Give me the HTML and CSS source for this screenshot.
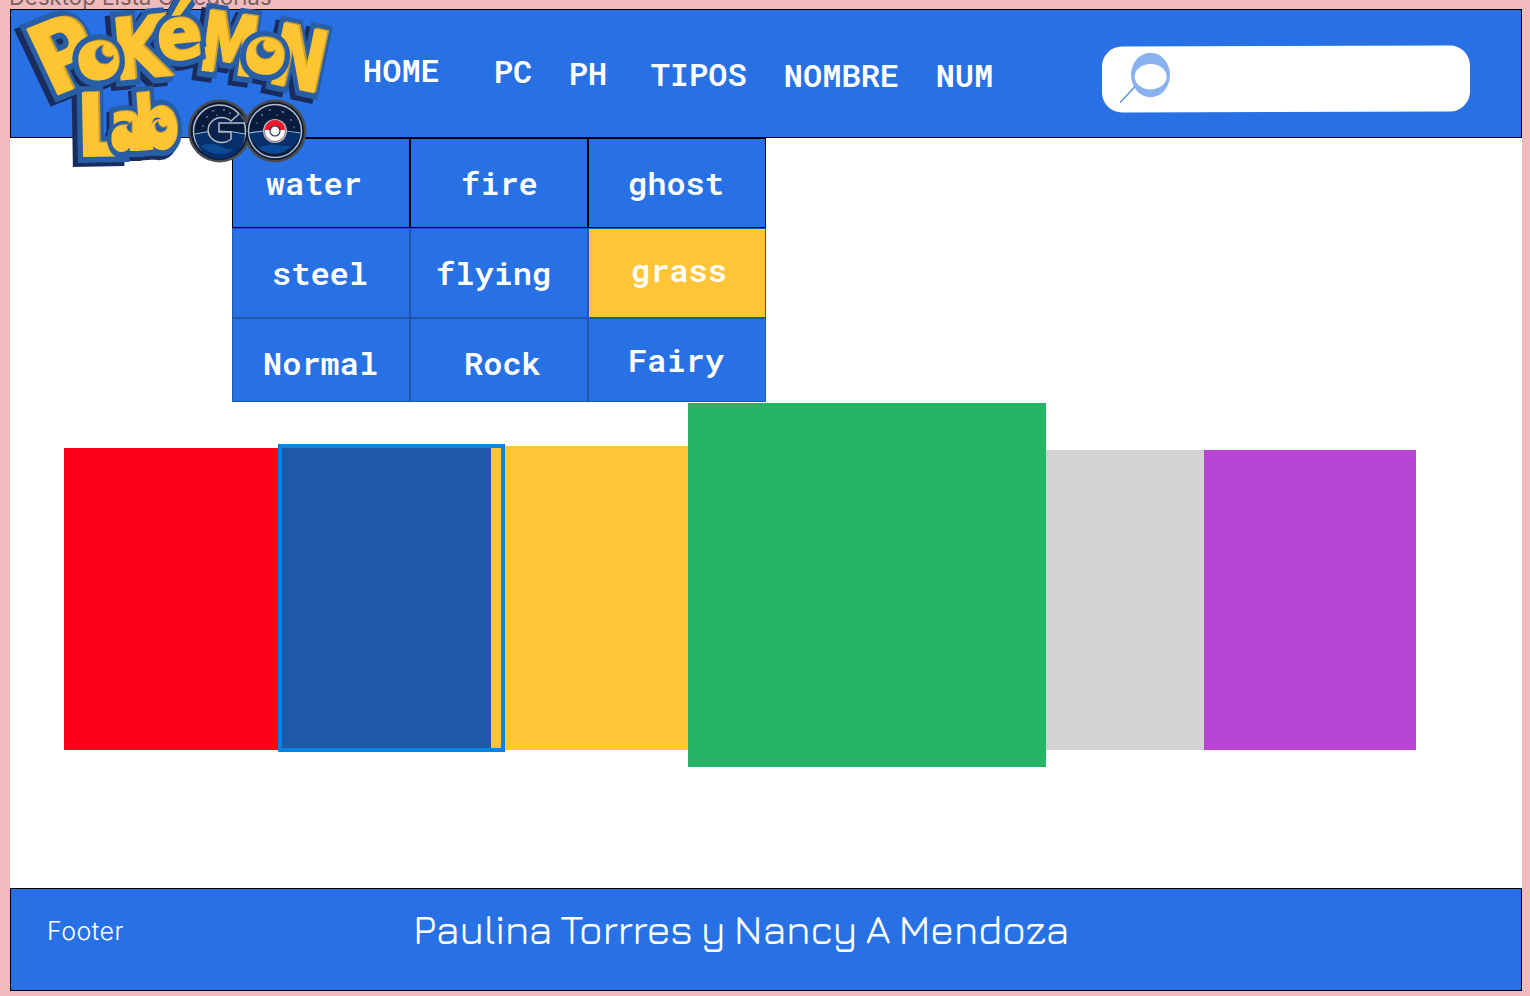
FILE: index.html
```
<!DOCTYPE html>
<html lang="es">
<head>
<meta charset="utf-8">
<title>Pokémon Lab GO</title>
<link rel="stylesheet" href="styles.css">
</head>
<body>
<div class="frame-name">Desktop Lista Categorias</div>
<div class="frame">
  <header class="header">
    <svg class="logo" width="340" height="175" viewBox="0 0 340 175" aria-label="Pokémon Lab GO">
      <defs>
        <g id="back">
          <text font-size="98" transform="translate(51 97) rotate(-22) scale(.84 1) skewX(4)">P</text>
          <text font-size="84" transform="translate(115 80) rotate(-5) scale(.84 1)">K</text>
          <text font-size="82" transform="translate(197 69) rotate(8) scale(.7 1)">M</text>
          <text font-size="86" transform="translate(266 82) rotate(12) scale(.76 .98)">N</text>
          <text font-size="86" transform="translate(77 156) rotate(-1) scale(.88 1)">L</text>
        </g>
        <g id="front">
          <text font-size="64" transform="translate(79 81) rotate(-7) scale(1 1.03)">o</text>
          <text font-size="72" transform="translate(159 61) rotate(-6) scale(.93 1)">é</text>
          <text font-size="60" transform="translate(243 71) rotate(5) scale(1 1.03)">o</text>
          <text font-size="68" transform="translate(110 150) scale(.72 1)">a</text>
          <text font-size="74" transform="translate(136 150) rotate(-4) scale(.84 1)">b</text>
        </g>
      </defs>
      <g class="logo-depth"><use href="#back" x="-5" y="4"/><use href="#front" x="-3" y="4"/></g>
      <use href="#back" class="logo-edge"/>
      <use href="#back" class="logo-shade" x="2" y="-1"/>
      <use href="#back" class="logo-face"/>
      <use href="#front" class="logo-edge"/>
      <use href="#front" class="logo-shade" x="1" y="-1"/>
      <use href="#front" class="logo-face"/>
      <g class="eye">
        <ellipse cx="101" cy="62" rx="13" ry="14"/><path d="M104 45a9.500 9.500 0 1 0 10 10a6 6 0 1 1-10-10z"/>
        <ellipse cx="264" cy="55" rx="12" ry="12"/><path d="M265 40a9.500 9.500 0 1 0 10 10a6 6 0 1 1-10-10z"/>
        <ellipse cx="160" cy="131" rx="10" ry="12"/><path d="M158 121a6 6 0 1 0 9 5q-7 4-9-5z"/>
        <ellipse cx="126" cy="135" rx="8" ry="9"/><path d="M132 121q-11 7 0 12z"/>
      </g>
      <circle cx="219.500" cy="131" r="31.500" fill="#4a4c4d"/><circle cx="275" cy="131" r="31.500" fill="#4a4c4d"/>
      <circle cx="219.500" cy="131" r="29" fill="#071b3c"/><circle cx="275" cy="131" r="29" fill="#071b3c"/>
      <g class="badge">
        <circle cx="219.500" cy="131" r="26"/><circle cx="275" cy="131" r="26.500"/>
      </g>
      <path d="M195 134q24-6 50 0a25 25 0 0 1-50 0zM249.500 133q25-5 51 0a26 26 0 0 1-51 0z" fill="#06306c"/>
      <path d="M200 146q12-4 20 0t14 3q-15 12-34-3zM258 148q12-5 20-3t14 0q-15 16-34 3z" fill="#0c4a96"/>
      <path d="M195 134q24-6 50 0M249.500 133q25-5 51 0" fill="none" stroke="#8bb9de" stroke-width="1.200"/>
      <g fill="#c9d9ee"><circle cx="207" cy="117" r=".7"/><circle cx="213" cy="111" r=".7"/><circle cx="224" cy="110" r=".8"/><circle cx="203" cy="126" r=".7"/><circle cx="230" cy="113" r=".7"/><circle cx="217" cy="115" r=".6"/><circle cx="262" cy="115" r=".7"/><circle cx="270" cy="110" r=".7"/><circle cx="283" cy="112" r=".8"/><circle cx="291" cy="120" r=".7"/><circle cx="257" cy="123" r=".6"/><circle cx="294" cy="127" r=".6"/><circle cx="277" cy="115" r=".6"/></g>
      <path d="M240 113.500l-9 7.500q-5-2-9-2q-4 2-3 4h29q-2-6-8-9.500z" fill="#4a4c4d"/>
      <path d="M239 114l-8 7a13.500 12.500 0 1 0 0 18v-7h-12v-9h26" fill="#08234d" stroke="#b9bdc6" stroke-width="1.500"/>
      <circle cx="275" cy="131" r="12" fill="#b9bdc6"/>
      <circle cx="275" cy="131" r="10.500" fill="#fff" stroke="#6b252c" stroke-width=".6"/>
      <path d="M265 130a10 10 0 0 1 20 0z" fill="#f4162b"/>
      <circle cx="275" cy="131" r="5" fill="#fff" stroke="#22355a" stroke-width="1.200"/>
    </svg>
    <nav class="nav">
      <a class="home">HOME</a><a class="pc">PC</a><a class="ph">PH</a><a class="tipos">TIPOS</a><a class="nombre">NOMBRE</a><a class="num">NUM</a>
    </nav>
    <div class="search">
      <svg class="lens" width="72" height="64" viewBox="0 0 72 64">
        <path fill-rule="evenodd" fill="#8ab2f1" d="M29 29.500a19.500 22.300 0 1 0 39 0a19.500 22.300 0 1 0-39 0zM32.700 31.200a16 12.700 0 1 0 32 0a16 12.700 0 1 0-32 0z"/>
        <path d="M32.500 41.500L18 57" stroke="#3d7fe4" stroke-width="1.200"/>
      </svg>
    </div>
  </header>
  <main class="main">
    <div class="types">
      <div class="type dark water">water</div><div class="type dark fire">fire</div><div class="type dark ghost">ghost</div>
      <div class="type steel">steel</div><div class="type flying">flying</div><div class="type active grass">grass</div>
      <div class="type normal">Normal</div><div class="type rock">Rock</div><div class="type fairy">Fairy</div>
    </div>
    <div class="cards">
      <div class="card red"></div>
      <div class="card blue"><span class="selection"></span></div>
      <div class="card yellow"></div>
      <div class="card green"></div>
      <div class="card gray"></div>
      <div class="card purple"></div>
    </div>
  </main>
  <footer class="footer">
    <span class="footer-label">Footer</span>
    <span class="authors">Paulina Torrres y Nancy A Mendoza</span>
  </footer>
</div>
</body>
</html>
```

FILE: styles.css
```
* { box-sizing: border-box; }
body { margin: 0; height: 996px; overflow: hidden; background: #f1bbbe; }

.frame-name {
  height: 9px;
  padding: 0 0 1px 9px;
  display: flex;
  align-items: flex-end;
  white-space: nowrap;
  font: 22px/22px Inter, sans-serif;
  letter-spacing: 0.1px;
  color: #7a5e60;
}
.frame { width: 1512px; margin-left: 10px; }

.header {
  position: relative;
  z-index: 1;
  display: flex;
  align-items: flex-start;
  height: 129px;
  border: 1px solid #000;
  background: #2871e4;
}
.logo { position: absolute; left: -11px; top: -10px; overflow: visible; }
.logo text { font-family: "DejaVu Sans", sans-serif; font-weight: 700; }
.logo-depth { fill: #1a2b5e; stroke: #1a2b5e; stroke-width: 14; stroke-linejoin: miter; stroke-miterlimit: 2; }
.logo-edge { fill: #285ea6; stroke: #285ea6; stroke-width: 14; stroke-linejoin: miter; stroke-miterlimit: 2; }
.logo-shade { fill: #c49a32; stroke: #c49a32; stroke-width: 2; }
.logo-face { fill: #ffc432; stroke: #ffc432; stroke-width: 2; }
.eye ellipse { fill: #ffc432; }
.eye path { fill: #285ea6; stroke: #b98f30; stroke-width: 1; }
.badge { fill: #071b3c; stroke: #b9bdc6; stroke-width: 1.5; }

.nav { display: flex; align-items: flex-start; margin-left: 352px; width: 631px; }
.nav a, .type {
  font: 600 32px/38px "Roboto Mono", "DejaVu Sans Mono", monospace;
  color: #fff;
}
.home { margin-top: 41px; }
.pc { margin: 42px 0 0 54px; }
.ph { margin: 44px 0 0 36.5px; }
.tipos { margin: 45px 0 0 43.5px; }
.nombre { margin: 46px 0 0 37.2px; }
.num { margin: 46px 0 0 36.6px; }

.search {
  width: 368px;
  height: 66px;
  margin: 35.500px 0 0 108px;
  border-radius: 20px;
  background: #fff;
  transform: rotate(-0.2deg);
}
.lens { display: block; margin: -1px 0 0 -0.5px; }

.main { height: 750px; background: #fff; }
.types {
  display: grid;
  grid-template-columns: repeat(3, 178px);
  grid-template-rows: 90px 90px 84px;
  margin-left: 222px;
  width: 534px;
}
.type { border: 1px solid #1f57a9; background: #2871e4; padding-top: 25px; }
.dark { border-color: #000; }
.active { background: #ffc536; }
.water { padding-left: 33px; }
.fire { padding-left: 50px; }
.ghost { padding-left: 39px; }
.steel { padding-left: 39px; }
.flying { padding-left: 25px; }
.grass { padding: 22px 0 0 42px; }
.normal { padding-left: 30px; }
.rock { padding-left: 53px; }
.fairy { padding: 22px 0 0 39px; }

.cards { display: flex; align-items: flex-start; padding: 1px 0 0 54px; }
.card { height: 300px; margin-top: 47px; }
.red { width: 214px; height: 302px; margin-top: 45px; background: #ff001a; }
.blue { position: relative; width: 213px; height: 302px; margin-top: 45px; background: #1f57a9; }
.selection { position: absolute; left: 0; top: -4px; width: 227px; height: 308px; border: 4px solid #0083e5; z-index: 1; }
.yellow { width: 197px; height: 304px; margin-top: 43px; background: #ffc536; }
.green { width: 358px; height: 364px; margin-top: 0; background: #25b567; }
.gray { width: 158px; background: #d4d4d4; }
.purple { width: 212px; background: #b744d2; }

.footer {
  display: flex;
  align-items: flex-start;
  height: 103px;
  border: 1px solid #000;
  background: #2871e4;
  color: #fff;
}
.footer-label { width: 367px; padding: 27px 0 0 36px; font: 300 25px/30px Inter, sans-serif; letter-spacing: 0.5px; }
.authors { padding: 16px 0 0 35px; font: 500 40px/48px Jura, "Advent Pro", "Share Tech", Roboto, sans-serif; letter-spacing: -0.8px; word-spacing: -1.5px; white-space: nowrap; }
```
